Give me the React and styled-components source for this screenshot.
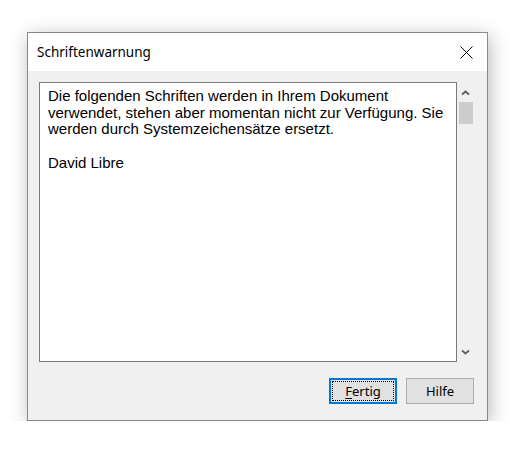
import React from "react";
import styled, { createGlobalStyle } from "styled-components";

const GlobalStyle = createGlobalStyle`
  html, body {
    margin: 0;
    padding: 0;
    background: #ffffff;
  }
  * {
    box-sizing: border-box;
  }
`;

const Page = styled.div`
  padding: 32px 0 0 27px;
`;

const Window = styled.div`
  width: 461px;
  height: 389px;
  display: flex;
  flex-direction: column;
  border: 1px solid #888888;
  background: #f0f0f0;
  box-shadow: 2px 4px 18px rgba(0, 0, 0, 0.28);
`;

const TitleBar = styled.div`
  height: 38px;
  flex: none;
  display: flex;
  align-items: center;
  justify-content: space-between;
  background: #ffffff;
  padding-left: 9px;
`;

const Title = styled.span`
  font-family: "Noto Sans", "Open Sans", sans-serif;
  font-size: 13.5px;
  color: #000000;
`;

const CloseButton = styled.div`
  width: 46px;
  height: 38px;
  display: flex;
  align-items: center;
  justify-content: center;
  padding-left: 4px;
`;

const Body = styled.div`
  flex: 1;
  display: flex;
  flex-direction: column;
  padding: 11px 13px 16px 11px;
`;

const EditRow = styled.div`
  display: flex;
  height: 280px;
`;

const TextBox = styled.div`
  width: 418px;
  border: 1px solid #7a7a7a;
  background: #ffffff;
  padding: 5px 8px;
  font-family: "Liberation Sans", Arial, sans-serif;
  font-size: 15px;
  line-height: 16.7px;
  color: #000000;
`;

const Para = styled.p`
  margin: 0 0 16.7px 0;
  white-space: nowrap;
`;

const ScrollBar = styled.div`
  width: 17px;
  display: flex;
  flex-direction: column;
  align-items: center;
`;

const Arrow = styled.div`
  height: 17px;
  width: 17px;
  display: flex;
  align-items: center;
  justify-content: center;
  margin-top: ${(p) => (p.down ? "auto" : "2px")};
  margin-bottom: ${(p) => (p.down ? "2px" : "0")};
`;

const Thumb = styled.div`
  width: 14px;
  height: 22px;
  margin-top: 1px;
  margin-left: 1px;
  background: #cdcdcd;
`;

const ButtonRow = styled.div`
  margin-top: auto;
  display: flex;
  justify-content: flex-end;
  gap: 9px;
`;

const Button = styled.div`
  position: relative;
  width: 68px;
  height: 26px;
  display: flex;
  align-items: center;
  justify-content: center;
  background: #e1e1e1;
  border: ${(p) => (p.focused ? "2px solid #0078d7" : "1px solid #adadad")};
  font-family: "Noto Sans", "Open Sans", sans-serif;
  font-size: 13px;
  color: #000000;
  padding-bottom: 1px;

  &::after {
    content: "";
    display: ${(p) => (p.focused ? "block" : "none")};
    position: absolute;
    inset: 1px;
    border: 1px dotted #000000;
  }
`;

const AccessKey = styled.span`
  text-decoration: underline;
  text-underline-offset: 2px;
`;

const Chevron = ({ down }) => (
  <svg width="9" height="6" viewBox="0 0 9 6">
    <polyline
      points={down ? "1,1.5 4.5,4.5 8,1.5" : "1,4.5 4.5,1.5 8,4.5"}
      fill="none"
      stroke="#606060"
      strokeWidth="1.8"
    />
  </svg>
);

const App = () => {
  return (
    <Page>
      <GlobalStyle />
      <Window>
        <TitleBar>
          <Title>Schriftenwarnung</Title>
          <CloseButton>
            <svg width="13" height="13" viewBox="0 0 13 13">
              <path d="M0.5 0.5 L12.5 12.5 M12.5 0.5 L0.5 12.5" stroke="#000" strokeWidth="1" />
            </svg>
          </CloseButton>
        </TitleBar>
        <Body>
          <EditRow>
            <TextBox>
              <Para>
                Die folgenden Schriften werden in Ihrem Dokument
                <br />
                verwendet, stehen aber momentan nicht zur Verfügung. Sie
                <br />
                werden durch Systemzeichensätze ersetzt.
              </Para>
              <Para>David Libre</Para>
            </TextBox>
            <ScrollBar>
              <Arrow>
                <Chevron />
              </Arrow>
              <Thumb />
              <Arrow down>
                <Chevron down />
              </Arrow>
            </ScrollBar>
          </EditRow>
          <ButtonRow>
            <Button focused>
              <span>
                <AccessKey>F</AccessKey>ertig
              </span>
            </Button>
            <Button>Hilfe</Button>
          </ButtonRow>
        </Body>
      </Window>
    </Page>
  );
};

export default App;
